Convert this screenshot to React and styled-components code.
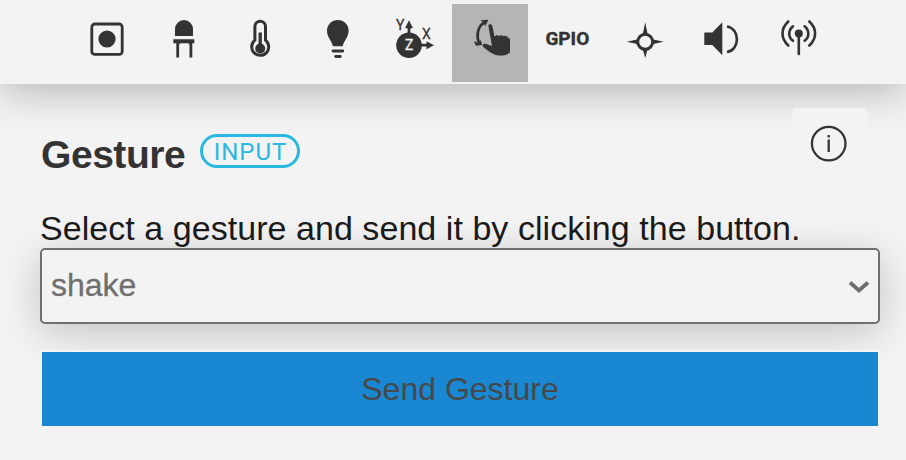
import React from "react";
import styled, { createGlobalStyle } from "styled-components";

const ink = "#333333";
const paper = "#f3f3f3";

const Global = createGlobalStyle`
  * { box-sizing: border-box; }
  body {
    margin: 0;
    background: ${paper};
    font-family: "Liberation Sans", Arial, sans-serif;
    overflow: hidden;
  }
`;

const Page = styled.div`
  width: 906px;
  height: 460px;
  overflow: hidden;
`;

const Toolbar = styled.nav`
  display: flex;
  height: 84px;
  padding: 4px 0 2px 68px;
  background: ${paper};
  box-shadow: 0 8px 40px rgba(0, 0, 0, 0.25);
`;

const Tool = styled.button`
  display: flex;
  justify-content: center;
  align-items: flex-start;
  flex: 0 0 76px;
  height: 78px;
  margin-right: 0.9px;
  padding: 0;
  border: 0;
  color: ${ink};
  background: ${(p) => (p.$active ? "#b5b5b5" : "transparent")};
`;

const Glyph = styled.svg`
  display: block;
  width: 76px;
  height: 78px;
  overflow: visible;
`;

const AxisLabel = styled.text`
  font: 14px Roboto, sans-serif;
  fill: ${(p) => (p.$light ? paper : ink)};
  stroke: ${(p) => (p.$light ? paper : ink)};
  stroke-width: 0.3px;
`;

const PinLabel = styled.span`
  font: 700 19px/22px Roboto, sans-serif;
  -webkit-text-stroke: 0.4px ${ink};
  letter-spacing: 0;
  margin-top: 24px;
`;

const Panel = styled.main`
  padding: 24px 26px 0 40px;
`;

const Header = styled.header`
  display: flex;
  align-items: flex-start;
  height: 78px;
`;

const Title = styled.h1`
  margin: 25px 13px 0 1px;
  width: 146px;
  font-size: 39px;
  line-height: 44px;
  letter-spacing: -0.45px;
  white-space: nowrap;
  color: ${ink};
`;

const Tag = styled.span`
  display: flex;
  align-items: center;
  justify-content: center;
  width: 100px;
  height: 34px;
  margin-top: 26px;
  padding: 2px 0 0 1px;
  border: 3px solid #2bb8e0;
  border-radius: 17px;
  color: #2bb8e0;
  font: 24px/28px Roboto, sans-serif;
  letter-spacing: 1px;
`;

const InfoButton = styled.button`
  width: 76px;
  height: 76px;
  margin: 0 12px 0 auto;
  padding: 0;
  border: 0;
  border-radius: 5px;
  background: ${paper};
  color: ${ink};
`;

const Prompt = styled.p`
  margin: 23px 0 0;
  height: 39px;
  font-size: 34px;
  line-height: 39px;
  letter-spacing: 0.05px;
  white-space: nowrap;
  color: #1a1a1a;
`;

const Select = styled.div`
  display: flex;
  align-items: center;
  justify-content: space-between;
  height: 76px;
  padding: 0 8px 2px 9px;
  border: 2px solid #6f6f6f;
  border-radius: 5px;
  background: ${paper};
  box-shadow: 0 8px 40px rgba(0, 0, 0, 0.2);
  color: #6f6f6f;
  font-size: 32px;
  -webkit-text-stroke: 0.3px #6f6f6f;
`;

const Chevron = styled.svg`
  width: 22px;
  height: 14px;
  margin-top: 3px;
`;

const SendButton = styled.button`
  position: relative;
  display: block;
  width: 100%;
  height: 78px;
  margin-top: 26px;
  padding: 0;
  border: 2px solid ${paper};
  background: #1987d1;
  color: #484848;
  font: 32px "Liberation Sans", Arial, sans-serif;
`;

/* Every glyph is drawn in the 76x78 space of its toolbar cell. */
const glyphs = {
  button: (
    <>
      <rect x="23.8" y="20" width="30.4" height="30.4" rx="3" fill="none" stroke={ink} strokeWidth="2.8" />
      <circle cx="39" cy="35" r="8.6" />
    </>
  ),
  led: (
    <>
      <path d="M30 32V25a9 9 0 0 1 18 0v7z" />
      <path d="M28.300 35.200h21v4h-2v14.200h-2.800V41q0-1.800-1.800-1.800H35.900q-1.800 0-1.800 1.800v12.400H31.300V39.200h-3z" />
    </>
  ),
  temperature: (
    <>
      <path
        d="M32.900 36.200V22.600a5.300 5.300 0 0 1 10.600 0v13.600a8.500 8.500 0 1 1-10.600 0z"
        fill="none"
        stroke={ink}
        strokeWidth="3"
      />
      <circle cx="38.200" cy="44.500" r="5" />
      <path d="M38.200 44V28.500" stroke={ink} strokeWidth="3.300" />
    </>
  ),
  light: (
    <>
      <path d="M34 42.200c-1-5-6-9-6-15.500a10.800 10.800 0 0 1 21.600 0c0 6.500-5 10.500-6 15.500z" />
      <path d="M34 47h9.800M36.700 52.500h4.600" stroke={ink} strokeWidth="2.800" strokeLinecap="round" />
    </>
  ),
  motion: (
    <>
      <circle cx="33" cy="41.200" r="12.800" />
      <path d="M33 30v-8M44 41.200h8" stroke={ink} strokeWidth="2.800" />
      <path d="M33 16.300l4 8h-8zM58 41.200l-7.500-4v8z" />
      <AxisLabel x="20" y="25.500">Y</AxisLabel>
      <AxisLabel x="45.900" y="35.200">X</AxisLabel>
      <AxisLabel $light x="28.900" y="46.200">Z</AxisLabel>
    </>
  ),
  gesture: (
    <>
      <path d="M36.300 21.500c.8-1.800 3.600-1.700 4 .3l2.200 11c1-1.700 3.400-2 4.600-.8 1.300-1.200 3.300-1.100 4.300.2 1.700-1.100 3.900-.4 4.400 1.300 1.300.2 2.200 1.100 2.200 2.400v12.500c-3.500 3-8 3.500-12 3-5.500-1-10.500-5-14.300-8.200-1.500-.6-1.300-3.500 1.300-3.800l7 2.500z" />
      <path d="M32.500 18.500c-7.500 4-8.200 14-5.300 21" fill="none" stroke={ink} strokeWidth="2.700" />
      <path d="M28.500 16.200l8-.4-3.300 6.400-1.200-3.400zM21.800 37.200l4.600 1.600 2.300-2.800 1.600 5-6.300.8z" />
    </>
  ),
  compass: (
    <>
      <circle cx="39.200" cy="37.800" r="7.500" fill="none" stroke={ink} strokeWidth="3" />
      <path d="M36.700 30.500L39.200 18.300l2.500 12.200zM36.700 45L39.200 54l2.500-9zM32.200 35.300L20.700 37.800l11.500 2.500zM46.200 35.300L57.700 37.800l-11.500 2.500z" />
    </>
  ),
  sound: (
    <>
      <path d="M21.300 28.500h8l10-10.300v33L29.300 41h-8z" />
      <path d="M44 22.500c13.200 2 13.200 23.500 0 25.500" fill="none" stroke={ink} strokeWidth="2.600" />
    </>
  ),
  radio: (
    <>
      <circle cx="38.800" cy="29.500" r="4" />
      <path
        d="M38.800 31v19M33 22.300c-5 4-5 11 0 14.500M44.600 22.300c5 4 5 11 0 14.500M28.300 17.500c-7.700 7-7.700 17 0 24M49.300 17.500c7.700 7 7.700 17 0 24"
        fill="none"
        stroke={ink}
        strokeWidth="2.600"
        strokeLinecap="round"
      />
    </>
  ),
};

const tools = ["button", "led", "temperature", "light", "motion", "gesture", "gpio", "compass", "sound", "radio"];

export default function App() {
  return (
    <Page>
      <Global />
      <Toolbar>
        {tools.map((name) => (
          <Tool key={name} $active={name === "gesture"} aria-label={name}>
            {name === "gpio" ? (
              <PinLabel>GPIO</PinLabel>
            ) : (
              <Glyph viewBox="0 0 76 78" fill={ink}>{glyphs[name]}</Glyph>
            )}
          </Tool>
        ))}
      </Toolbar>
      <Panel>
        <Header>
          <Title>Gesture</Title>
          <Tag>INPUT</Tag>
          <InfoButton aria-label="info">
            <Glyph viewBox="0 0 76 78">
              <circle cx="36.700" cy="35.600" r="16.800" fill="none" stroke={ink} strokeWidth="2.300" />
              <path d="M36.700 31.500v12.500M36.700 27v2.400" stroke={ink} strokeWidth="2.300" />
            </Glyph>
          </InfoButton>
        </Header>
        <Prompt>Select a gesture and send it by clicking the button.</Prompt>
        <Select>
          shake
          <Chevron viewBox="0 0 22 14">
            <path d="M2 2.500l9 8 9-8" fill="none" stroke="#6f6f6f" strokeWidth="3.800" />
          </Chevron>
        </Select>
        <SendButton>Send Gesture</SendButton>
      </Panel>
    </Page>
  );
}
